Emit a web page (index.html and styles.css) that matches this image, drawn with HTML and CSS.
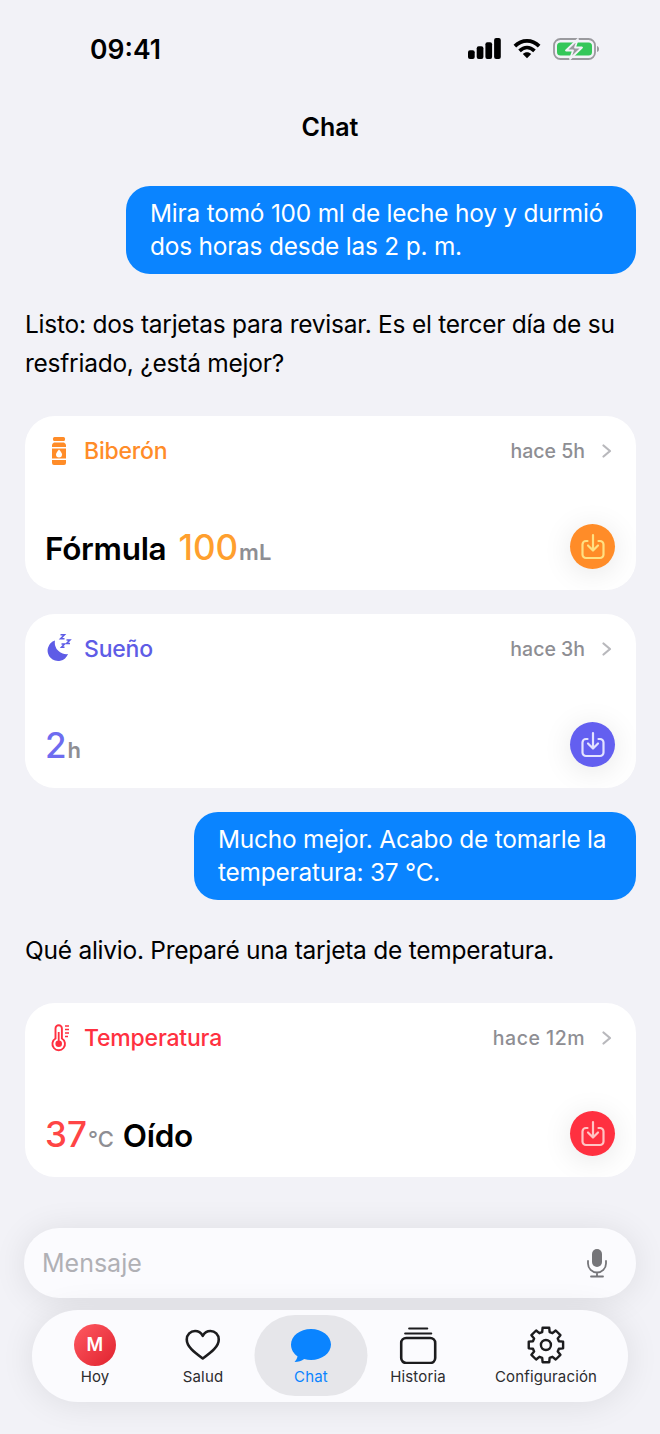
FILE: index.html
```html
<!DOCTYPE html>
<html lang="es">
<head>
<meta charset="UTF-8" />
<meta name="viewport" content="width=device-width, initial-scale=1" />
<title>Chat</title>
<link rel="stylesheet" href="styles.css">
</head>
<body>
  <div class="status">
    <span class="time">09:41</span>
    <div class="status-icons">
      <svg width="33" height="21" viewBox="0 0 33 21"><rect x="0" y="12.300" width="6.700" height="8.700" rx="2"/><rect x="8.700" y="8.300" width="6.700" height="12.700" rx="2"/><rect x="17.400" y="4.300" width="6.700" height="16.700" rx="2"/><rect x="26.100" y="0" width="6.700" height="21" rx="2"/></svg>
      <svg width="28" height="21" viewBox="0 0 30 22"><path d="M2 8.500C9.500 1 20.500 1 28 8.500M7 13.500C12 8.800 18 8.800 23 13.500" fill="none" stroke="#000" stroke-width="4"/><path d="M10.500 16.800C13 14.500 17 14.500 19.500 16.800L15 21.500Z"/></svg>
      <svg width="46" height="22" viewBox="0 0 46 22"><rect x="1" y="1" width="41" height="20" rx="6.500" fill="none" stroke="#9a9a9e" stroke-width="1.800"/><path d="M44 8c1.500.5 2 1.500 2 3s-.5 2.500-2 3z" fill="#9a9a9e"/><rect x="4" y="4.500" width="35" height="13" rx="3.500" fill="#34c759"/><path d="M25 1 13 12.500h7L17 21 29 9.500h-7z" fill="#9a9a9e" stroke="#f2f2f7" stroke-width="1.800" stroke-linejoin="round"/></svg>
    </div>
  </div>

  <h1 class="title">Chat</h1>

  <main class="thread">
    <div class="bubble bubble-wide">Mira tomó 100 ml de leche hoy y durmió dos horas desde las 2 p. m.</div>
    <p class="reply">Listo: dos tarjetas para revisar. Es el tercer día de su resfriado, ¿está mejor?</p>

    <section class="card orange">
      <div class="card-head">
        <svg class="card-icon" width="30" height="30" viewBox="0 0 30 30"><rect x="9" y="1" width="12" height="4" rx="1.500"/><path d="M10 6.500h10c1.300.8 2 1.800 2 3V11H8V9.500c0-1.200.7-2.200 2-3zM8 24h14v3a2 2 0 0 1-2 2H10a2 2 0 0 1-2-2zM8 12.500h14V22.500H8z"/><path d="M15 13.500c2 2.400 3 3.700 3 5a3 3 0 0 1-6 0c0-1.300 1-2.600 3-5z" fill="#fff"/></svg>
        <span class="card-name">Biberón</span>
        <span class="card-ago">hace 5h</span>
        <svg class="chevron" width="10" height="14" viewBox="0 0 10 14"><path d="M1.500 1.500 8 7l-6.500 5.500"/></svg>
      </div>
      <div class="card-body">
        <span class="label">Fórmula</span>
        <span class="reading"><span class="num">100</span><span class="unit">mL</span></span>
        <button class="save" type="button"><svg width="28" height="28" viewBox="0 0 28 28"><path d="M8.500 8H7a3.500 3.500 0 0 0-3.500 3.500v10A3.500 3.500 0 0 0 7 25h14a3.500 3.500 0 0 0 3.500-3.500v-10A3.500 3.500 0 0 0 21 8h-1.500M14 2v15M9 12.500l5 5 5-5"/></svg></button>
      </div>
    </section>

    <section class="card purple">
      <div class="card-head">
        <svg class="card-icon" width="30" height="30" viewBox="0 0 30 30"><path d="M11 6.500A10.500 10.500 0 1 0 24 20 11.500 11.500 0 0 1 11 6.500z"/><path d="M16.500.8h4l-4 4h4M22.500 6h3.500l-3.500 3.500H26M17.500 10h3l-3 3.200h3" fill="none" stroke="currentColor" stroke-width="1.500"/></svg>
        <span class="card-name">Sueño</span>
        <span class="card-ago">hace 3h</span>
        <svg class="chevron" width="10" height="14" viewBox="0 0 10 14"><path d="M1.500 1.500 8 7l-6.500 5.500"/></svg>
      </div>
      <div class="card-body">
        <span class="reading"><span class="num">2</span><span class="unit">h</span></span>
        <button class="save" type="button"><svg width="28" height="28" viewBox="0 0 28 28"><path d="M8.500 8H7a3.500 3.500 0 0 0-3.500 3.500v10A3.500 3.500 0 0 0 7 25h14a3.500 3.500 0 0 0 3.500-3.500v-10A3.500 3.500 0 0 0 21 8h-1.500M14 2v15M9 12.500l5 5 5-5"/></svg></button>
      </div>
    </section>

    <div class="bubble bubble-narrow">Mucho mejor. Acabo de tomarle la temperatura: 37 °C.</div>
    <p class="reply">Qué alivio. Preparé una tarjeta de temperatura.</p>

    <section class="card red">
      <div class="card-head">
        <svg class="card-icon" width="30" height="30" viewBox="0 0 30 30"><path d="M11.500 15.500V5.500a3.200 3.200 0 0 1 6.400 0v10a6.300 6.300 0 1 1-6.400 0z" fill="none" stroke="currentColor" stroke-width="1.900"/><circle cx="14.700" cy="20.800" r="3.300"/><rect x="13.800" y="9" width="1.800" height="10"/><path d="M21 3h4M21 6.500h4M21 10h4M21 13.500h3" stroke="currentColor" stroke-width="1.400"/></svg>
        <span class="card-name">Temperatura</span>
        <span class="card-ago">hace 12m</span>
        <svg class="chevron" width="10" height="14" viewBox="0 0 10 14"><path d="M1.500 1.500 8 7l-6.500 5.500"/></svg>
      </div>
      <div class="card-body">
        <span class="reading"><span class="num">37</span><span class="unit">°C</span></span>
        <span class="label">Oído</span>
        <button class="save" type="button"><svg width="28" height="28" viewBox="0 0 28 28"><path d="M8.500 8H7a3.500 3.500 0 0 0-3.500 3.500v10A3.500 3.500 0 0 0 7 25h14a3.500 3.500 0 0 0 3.500-3.500v-10A3.500 3.500 0 0 0 21 8h-1.500M14 2v15M9 12.500l5 5 5-5"/></svg></button>
      </div>
    </section>
  </main>

  <div class="dock">
    <div class="composer">
      <span class="placeholder">Mensaje</span>
      <svg width="22" height="30" viewBox="0 0 22 30"><rect x="6" y="1" width="10" height="18" rx="5" fill="#757579"/><path d="M2 13v2.500a9 9 0 0 0 18 0V13M11 24.500V28M5 28.500h12" fill="none" stroke="#757579" stroke-width="1.800" stroke-linecap="round"/></svg>
    </div>
    <nav class="tabs">
      <a class="tab tab-hoy"><span class="tab-icon"><span class="avatar">M</span></span><span>Hoy</span></a>
      <a class="tab tab-salud"><span class="tab-icon"><svg width="36" height="32" viewBox="0 0 36 32"><path d="M18 29.500C9 23 2 17.500 2 10.500 2 5.500 5.800 2 10.300 2c3.300 0 6 1.800 7.700 4.800C19.700 3.800 22.400 2 25.700 2 30.200 2 34 5.500 34 10.500c0 7-7 12.500-16 19z" fill="none" stroke="#1c1c1e" stroke-width="2.600" stroke-linejoin="round"/></svg></span><span>Salud</span></a>
      <a class="tab tab-chat"><span class="tab-icon"><svg width="41" height="35" viewBox="0 0 41 35"><path d="M20.500 1C31.500 1 40.500 8 40.500 16.500S31.500 32 20.500 32c-2.400 0-4.700-.3-6.800-1-2.500 1.800-5.800 3-9.700 3 1.400-1.300 2.600-3.300 3-5.700C2.900 25.500.5 21.300.5 16.500.5 8 9.500 1 20.500 1z" fill="#0a84ff"/></svg></span><span>Chat</span></a>
      <a class="tab tab-historia"><span class="tab-icon"><svg width="38" height="38" viewBox="0 0 38 38"><rect x="2" y="12" width="34" height="25" rx="5" fill="none" stroke="#1c1c1e" stroke-width="2.600"/><path d="M6 7.500h26M10 2.500h18" stroke="#1c1c1e" stroke-width="2.200" stroke-linecap="round"/></svg></span><span>Historia</span></a>
      <a class="tab tab-config"><span class="tab-icon"><svg width="38" height="38" viewBox="-19 -19 38 38"><polygon points="-3.720,-12.980 -3.340,-17.180 3.340,-17.180 3.720,-12.980 6.550,-11.810 9.790,-14.510 14.510,-9.790 11.810,-6.550 12.980,-3.720 17.180,-3.340 17.180,3.340 12.980,3.720 11.810,6.550 14.510,9.790 9.790,14.510 6.550,11.810 3.720,12.980 3.340,17.180 -3.340,17.180 -3.720,12.980 -6.550,11.810 -9.790,14.510 -14.510,9.790 -11.810,6.550 -12.980,3.720 -17.180,3.340 -17.180,-3.340 -12.980,-3.720 -11.810,-6.550 -14.510,-9.790 -9.790,-14.510 -6.550,-11.810" fill="none" stroke="#1c1c1e" stroke-width="2.400" stroke-linejoin="round"/><circle r="5" fill="none" stroke="#1c1c1e" stroke-width="2.400"/></svg></span><span>Configuración</span></a>
    </nav>
  </div>
</body>
</html>
```

FILE: styles.css
```css
* {
  box-sizing: border-box;
}
body {
  font-family: Inter, 'Liberation Sans', sans-serif;
  background: #f2f2f7;
  margin: 0;
  width: 660px;
  height: 1434px;
  overflow: hidden;
  color: #000;
  position: relative;
}
.status {
  height: 97px;
  padding: 30px 61px 0 90px;
  display: flex;
  justify-content: space-between;
  align-items: flex-start;
}
.time {
  font-size: 26.500px;
  font-weight: 600;
  line-height: 38px;
}
.status-icons {
  display: flex;
  align-items: flex-start;
  gap: 12px;
  padding-top: 8px;
}
.title {
  margin: 15px 0 0;
  height: 74px;
  text-align: center;
  font-size: 25px;
  font-weight: 600;
  line-height: 30px;
}
.thread {
  padding: 0 24px 0 25px;
  display: flex;
  flex-direction: column;
}
.bubble {
  align-self: flex-end;
  background: #0a84ff;
  color: #fff;
  font-size: 24.400px;
  line-height: 33px;
  padding: 11px 24px 11px;
  border-radius: 24px;
  letter-spacing: -0.2px;
}
.bubble-wide {
  width: 510px;
}
.bubble-narrow {
  width: 442px;
}
.reply {
  margin: 31px 0 33px;
  font-size: 24.500px;
  line-height: 39px;
  letter-spacing: -0.25px;
}
.card {
  background: #fff;
  border-radius: 30px;
  height: 174px;
  padding: 0 21px 0 20px;
  margin-bottom: 24px;
  display: flex;
  flex-direction: column;
  overflow: hidden;
}
.card:last-child {
  margin-bottom: 0;
}
.card-head {
  display: flex;
  align-items: center;
  height: 70px;
}
.card-icon {
  fill: currentColor;
  margin-right: 10px;
  flex: none;
  margin-left: -1px;
}
.card-name {
  font-size: 23px;
  font-weight: 500;
  flex: 1;
  letter-spacing: -0.2px;
}
.card-ago {
  font-size: 19.500px;
  font-weight: 500;
  color: #8e8e93;
  margin-right: 17px;
}
.red .card-ago {
  letter-spacing: 0.5px;
}
.chevron {
  fill: none;
  stroke: #b8b8bc;
  stroke-width: 2.200;
  stroke-linecap: round;
  stroke-linejoin: round;
  margin-right: 3px;
}
.card-body {
  flex: 1;
  display: flex;
  align-items: baseline;
  gap: 12px;
  padding-top: 40px;
  position: relative;
}
.label {
  font-size: 31.500px;
  font-weight: 600;
  line-height: 42px;
  letter-spacing: -0.3px;
}
.num {
  font-size: 35px;
  font-weight: 500;
  line-height: 42px;
}
.unit {
  font-size: 22px;
  font-weight: 600;
  color: #8e8e93;
  margin-left: 1px;
}
.red .unit {
  font-weight: 500;
}
.red .label {
  margin-left: -3px;
}
.save {
  position: absolute;
  right: 0;
  top: 38px;
  width: 45px;
  height: 45px;
  border: none;
  border-radius: 50%;
  padding: 0;
  display: flex;
  align-items: center;
  justify-content: center;
  box-shadow: 0 4px 30px rgba(0,0,0,0.1);
}
.save svg {
  fill: none;
  stroke-width: 2.200;
  stroke-linecap: round;
  stroke-linejoin: round;
}
.orange .card-name, .orange .card-icon { color: #ff8c28; }
.orange .num { color: #ff9f2e; }
.orange .save { background: #ff8c28; }
.orange .save svg { stroke: #ffe082; }
.purple .card-name, .purple .card-icon { color: #5e5ce6; }
.purple .num { color: #6e6cf0; }
.purple .save { background: #635ff0; }
.purple .save svg { stroke: #e4e3ff; }
.red .card-name, .red .card-icon { color: #ff3040; }
.red .num { color: #ff4545; }
.red .save { background: #ff3040; }
.red .save svg { stroke: #ffc4c4; }
.dock {
  position: absolute;
  left: 0;
  right: 0;
  bottom: 0;
  height: 224px;
  padding: 18px 24px 0;
}
.composer {
  height: 70px;
  background: #fbfbfe;
  border-radius: 35px;
  padding: 0 28px 0 18px;
  display: flex;
  align-items: center;
  justify-content: space-between;
  box-shadow: 0 2px 34px rgba(0,0,0,0.09);
}
.placeholder {
  font-size: 25px;
  color: #b0b0b5;
}
.tabs {
  margin: 12px 8px 0;
  height: 92px;
  background: #fbfbfe;
  border-radius: 46px;
  position: relative;
  box-shadow: 0 2px 34px rgba(0,0,0,0.09);
}
.tab {
  position: absolute;
  top: 5px;
  height: 81px;
  padding-top: 9px;
  display: flex;
  flex-direction: column;
  align-items: center;
  gap: 1px;
  font-size: 15px;
  font-weight: 400;
  letter-spacing: 0.15px;
  line-height: 20px;
  color: #2c2c2e;
  transform: translateX(-50%);
}
.tab-icon {
  height: 42px;
  display: flex;
  align-items: center;
  justify-content: center;
}
.tab-hoy { left: 63px; }
.tab-salud { left: 171px; }
.tab-chat {
  left: 279px;
  width: 113px;
  background: #e6e6ea;
  border-radius: 41px;
  color: #0a84ff;
}
.tab-historia { left: 386px; }
.tab-config { left: 514px; white-space: nowrap; }
.avatar {
  width: 42px;
  height: 42px;
  border-radius: 50%;
  background: linear-gradient(135deg, #ff5a62, #e0222e);
  color: #fff;
  font-size: 18px;
  font-weight: 600;
  display: flex;
  align-items: center;
  justify-content: center;
}
```
